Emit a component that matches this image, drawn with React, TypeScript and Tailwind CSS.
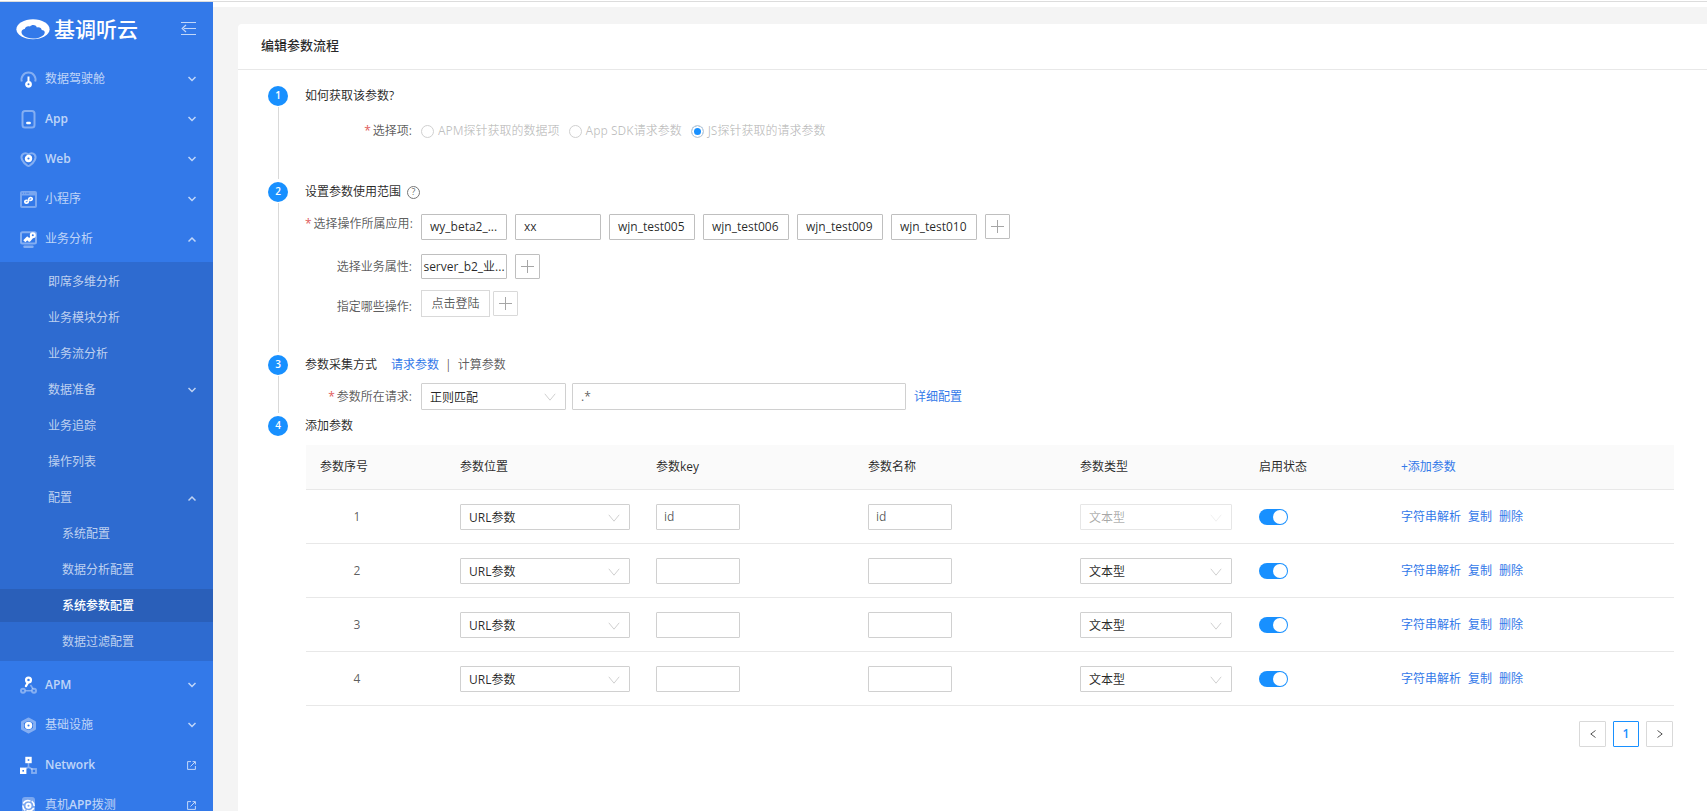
import React from 'react';
import clsx from 'clsx';

type MenuIconName = 'gauge' | 'phone' | 'heart' | 'mini' | 'chart' | 'apm' | 'infra' | 'network' | 'device';

const menuTop: { label: React.ReactNode; icon: MenuIconName; open?: boolean }[] = [
  { label: '数据驾驶舱', icon: 'gauge' },
  { label: <b>App</b>, icon: 'phone' },
  { label: <b>Web</b>, icon: 'heart' },
  { label: '小程序', icon: 'mini' },
  { label: '业务分析', icon: 'chart', open: true },
];

const subMenu: { label: string; level: 1 | 2; arrow?: 'up' | 'down'; active?: boolean }[] = [
  { label: '即席多维分析', level: 1 },
  { label: '业务模块分析', level: 1 },
  { label: '业务流分析', level: 1 },
  { label: '数据准备', level: 1, arrow: 'down' },
  { label: '业务追踪', level: 1 },
  { label: '操作列表', level: 1 },
  { label: '配置', level: 1, arrow: 'up' },
  { label: '系统配置', level: 2 },
  { label: '数据分析配置', level: 2 },
  { label: '系统参数配置', level: 2, active: true },
  { label: '数据过滤配置', level: 2 },
];

const menuBottom: { label: React.ReactNode; icon: MenuIconName; external?: boolean }[] = [
  { label: <b>APM</b>, icon: 'apm' },
  { label: '基础设施', icon: 'infra' },
  { label: <b>Network</b>, icon: 'network', external: true },
  { label: <>真机<b>APP</b>拨测</>, icon: 'device', external: true },
];

const sources = [
  { id: 'apm', label: 'APM探针获取的数据项' },
  { id: 'sdk', label: 'App SDK请求参数' },
  { id: 'js', label: 'JS探针获取的请求参数' },
];

const apps = ['wy_beta2_...', 'xx', 'wjn_test005', 'wjn_test006', 'wjn_test009', 'wjn_test010'];

const params = [
  { id: 1, key: 'id', name: 'id', locked: true },
  { id: 2, key: '', name: '', locked: false },
  { id: 3, key: '', name: '', locked: false },
  { id: 4, key: '', name: '', locked: false },
];

const iconShapes: Record<MenuIconName, React.ReactNode> = {
  gauge: (
    <>
      <path d="M1.800 10.500a7 7 0 1 1 13.400 0" strokeWidth="2" opacity=".4" />
      <path d="M8.500 5.500v5.500" strokeWidth="2" />
      <circle cx="8.500" cy="13.300" r="2.200" strokeWidth="2.400" />
    </>
  ),
  phone: (
    <>
      <rect x="2.500" y="0" width="12" height="16.500" rx="2.500" strokeWidth="2" opacity=".4" />
      <path d="M7.300 12h2.400" strokeWidth="2.400" strokeLinecap="round" />
    </>
  ),
  heart: (
    <>
      <path
        d="M8.500 3.600C6.800 1.900 4 1.900 2.500 3.500 1.100 5 1.300 7.200 2.200 9c1.200 2.500 3.200 4.400 5.200 5.600q1.100.6 2.200 0c2-1.200 4-3.100 5.200-5.600.9-1.800 1.100-4-.3-5.500C13 1.900 10.200 1.900 8.500 3.600Z"
        strokeWidth="2"
        opacity=".4"
      />
      <circle cx="8.500" cy="7.500" r="2.400" strokeWidth="2.600" />
    </>
  ),
  mini: (
    <>
      <path
        d="M2 0h13a2 2 0 0 1 2 2v13a2 2 0 0 1-2 2H2a2 2 0 0 1-2-2V2a2 2 0 0 1 2-2Zm0 4.500V15h13V4.500Z"
        fill="#fff"
        stroke="none"
        fillRule="evenodd"
        opacity=".35"
      />
      <path d="M1.800 2.200h1.200M4 2.200h1.200M6.200 2.200h3" stroke="#3379e9" strokeWidth="1" opacity=".7" />
      <path
        d="M6.800 9.300c-1.600-.1-2.200 1-1.900 1.900.5 1.400 3.400 1.200 3.500-.8l.3-2.300c.3-1.900 3.200-2.100 3.500-.5.2 1-.6 1.800-1.900 1.700"
        strokeWidth="1.700"
        strokeLinecap="round"
      />
    </>
  ),
  chart: (
    <>
      <rect x="1" y="1.200" width="15" height="11.200" rx="1.500" strokeWidth="2" opacity=".4" />
      <path d="M4.500 15.800h8" strokeWidth="2.400" strokeLinecap="round" opacity=".4" />
      <path d="m4.300 10.200 3-3 2 2 3-3.600" strokeWidth="3" strokeLinejoin="round" />
      <circle cx="12.800" cy="4.300" r="2" strokeWidth="2" />
    </>
  ),
  apm: (
    <>
      <circle cx="3" cy="13.800" r="2" strokeWidth="2" opacity=".4" />
      <circle cx="14" cy="13.800" r="2" strokeWidth="2" opacity=".4" />
      <path d="M5.500 13.800h6M10.500 8l2.500 3.800" strokeWidth="1.600" opacity=".4" />
      <circle cx="8.500" cy="3" r="2.400" strokeWidth="2.300" />
      <path d="M8 5.500 6 9" strokeWidth="2.400" strokeLinecap="round" />
    </>
  ),
  infra: (
    <>
      <path
        d="m8.500 2 6 3.300v6.400l-6 3.300-6-3.300V5.300Z"
        strokeWidth="3"
        strokeLinejoin="round"
        opacity=".4"
      />
      <circle cx="8.500" cy="8.500" r="2.400" strokeWidth="2.700" />
    </>
  ),
  network: (
    <>
      <path d="M8.500 6v4l-4 2.500M8.500 10l4 2.500" strokeWidth="1.600" opacity=".4" />
      <rect x="12" y="12" width="4" height="4" strokeWidth="1.800" opacity=".4" />
      <rect x="6.500" y="1" width="4" height="4" strokeWidth="2.400" />
      <rect x="1.200" y="11.800" width="4" height="4" strokeWidth="2.400" />
    </>
  ),
  device: (
    <>
      <rect x="2" y="0" width="13" height="17" rx="3" stroke="none" fill="#fff" opacity=".35" />
      <circle cx="8.500" cy="8.800" r="2" strokeWidth="2" />
      <path
        d="M3.200 6.500a6 6 0 0 1 7.300-2.400M2.800 8.500a6 6 0 0 0 2.500 4.800M13.800 11a6 6 0 0 1-7.300 2.400M14.200 9a6 6 0 0 0-2.500-4.800"
        strokeWidth="1.500"
      />
    </>
  ),
};

const MenuIcon: React.FC<{ name: MenuIconName }> = ({ name }) => (
  <svg viewBox="0 0 17 17" className="size-[17px] shrink-0 overflow-visible" fill="none" stroke="#fff" aria-hidden="true">
    {iconShapes[name]}
  </svg>
);

const Arrow: React.FC<{ up?: boolean }> = ({ up }) => (
  <svg viewBox="0 0 8 8" className="size-2 shrink-0" fill="none" stroke="currentColor" strokeWidth="1.500" aria-hidden="true">
    <path d={up ? 'm.5 6.500 3.500-3.500L7.500 6.500' : 'M.5 2 4 5.500 7.500 2'} />
  </svg>
);

const ExternalIcon: React.FC = () => (
  <svg viewBox="0 0 9 9" className="size-[9px] shrink-0" fill="none" stroke="currentColor" aria-hidden="true">
    <path d="M4 .6H.6v7.800h7.800V5M5.500.6h2.900v2.900M8 1 3.500 5.500" />
  </svg>
);

const Logo: React.FC = () => (
  <div className="flex items-center gap-1 text-white">
    <svg viewBox="0 0 34 21" className="h-[21px] w-[34px]" aria-hidden="true">
      <ellipse cx="17" cy="10.300" rx="16.600" ry="10" fill="#fff" />
      <path
        d="M6.500 15.800C4.600 13 5.600 10.600 8.700 10c.5-2.400 3.300-3.500 5.300-2.400 1.800-2.200 5.700-2 6.900.8 2.600-.6 4.700.6 4.800 2.600 3.200.2 4 2.700 2 4.900-2.700 2.500-6.500 3.600-10.700 3.600s-7.900-1.200-10.500-3.700Z"
        fill="#3379e9"
      />
    </svg>
    <span className="text-[21px] leading-6 font-medium">基调听云</span>
  </div>
);

const Sidebar: React.FC = () => (
  <aside className="w-[213px] shrink-0 overflow-hidden bg-[#3379e9] text-xs text-white/70">
    <div className="flex h-[57px] items-start justify-between pt-[15px] pr-[17px] pl-4">
      <Logo />
      <button type="button" aria-label="收起菜单" className="mt-1">
        <svg viewBox="0 0 15 15" className="size-[15px]" fill="none" stroke="currentColor" strokeWidth="1.200" aria-hidden="true">
          <path d="M0 1.500h15M3 7.500h12M0 13.500h15M5 4 1.200 7.500 5 11" />
        </svg>
      </button>
    </div>
    <nav>
      {menuTop.map((item) => (
        <a key={item.icon} href="#" className="flex h-10 items-center gap-2 pr-[17px] pl-5">
          <MenuIcon name={item.icon} />
          <span className="flex-1 *:font-semibold">{item.label}</span>
          <Arrow up={item.open} />
        </a>
      ))}
      <div className="mt-[3px] bg-[#2e6bd0] pt-0.5 pb-px">
        {subMenu.map((item) => (
          <div key={item.label} className="h-9 pt-px pb-0.5">
            <a
              href="#"
              className={clsx(
                'flex h-full items-center justify-between pr-[17px]',
                item.level === 1 ? 'pl-12' : 'pl-[62px]',
                item.active && 'bg-[#2a5fb9] font-medium text-white',
              )}
            >
              {item.label}
              {item.arrow && <Arrow up={item.arrow === 'up'} />}
            </a>
          </div>
        ))}
      </div>
      <div className="pt-1">
        {menuBottom.map((item) => (
          <a key={item.icon} href="#" className="flex h-10 items-center gap-2 pr-[17px] pl-5">
            <MenuIcon name={item.icon} />
            <span className="flex-1 *:font-semibold">{item.label}</span>
            {item.external ? <ExternalIcon /> : <Arrow />}
          </a>
        ))}
      </div>
    </nav>
  </aside>
);

const Step: React.FC<{ no: number; title: React.ReactNode; last?: boolean; className?: string; children: React.ReactNode }> = ({
  no,
  title,
  last,
  className,
  children,
}) => (
  <li className="flex gap-[17px]">
    <div className="flex w-5 shrink-0 flex-col items-center">
      <span className="flex size-5 shrink-0 items-center justify-center rounded-full bg-[#1890ff] text-[10px] font-semibold text-white">
        {no}
      </span>
      {!last && <span className="mt-px mb-[3px] w-px flex-1 bg-[#d9d9d9]" />}
    </div>
    <div className={clsx('min-w-0 flex-1', className)}>
      <div className="flex h-5 items-center text-black/85">{title}</div>
      {children}
    </div>
  </li>
);

const FieldLabel: React.FC<{ text: string; required?: boolean; htmlFor?: string }> = ({ text, required, htmlFor }) => (
  <label htmlFor={htmlFor} className="w-[116px] shrink-0 pr-[9px] text-right leading-5 whitespace-nowrap">
    {required && <span className="mr-0.5 text-[#e05c5c]">*</span>}
    {text}:
  </label>
);

const AddButton: React.FC<{ label: string; light?: boolean }> = ({ label, light }) => (
  <button
    type="button"
    aria-label={label}
    className={clsx(
      'flex size-[25px] items-center justify-center rounded-[1px] border',
      light ? 'border-[#d9d9d9]' : 'border-[#bfbfbf]',
    )}
  >
    <svg viewBox="0 0 13 13" className="size-[13px]" stroke="#a6a6a6" aria-hidden="true">
      <path d="M6.500 0v13M0 6.500h13" />
    </svg>
  </button>
);

const SelectBox: React.FC<{ label: string; value: string; id?: string; disabled?: boolean; className?: string }> = ({
  label,
  value,
  id,
  disabled,
  className,
}) => (
  <div className={clsx('relative', className)}>
    <select
      id={id}
      aria-label={id ? undefined : label}
      disabled={disabled}
      defaultValue={value}
      className="size-full appearance-none rounded-[1px] border border-[#d0d0d0] bg-white pt-0.5 pl-2 text-black/85 disabled:border-[#e6e6e6] disabled:text-black/35 disabled:opacity-100"
    >
      <option>{value}</option>
    </select>
    <svg
      viewBox="0 0 12 8"
      className={clsx('pointer-events-none absolute top-[10px] right-[10px] h-2 w-3', disabled && 'opacity-30')}
      fill="none"
      stroke="#d0d0d0"
      aria-hidden="true"
    >
      <path d="M.8.800 6 7.200 11.200.8" />
    </svg>
  </div>
);

const ParamTable: React.FC = () => (
  <table className="mt-[9px] ml-px w-full table-fixed border-separate border-spacing-0 text-left">
    <colgroup>
      <col className="w-[140px]" />
      <col className="w-[196px]" />
      <col className="w-[212px]" />
      <col className="w-[212px]" />
      <col className="w-[179px]" />
      <col className="w-[142px]" />
      <col />
    </colgroup>
    <thead>
      <tr className="h-[45px] text-black/85 *:border-b *:border-[#e8e8e8] *:bg-[#fafafa] *:px-[14px] *:font-normal">
        <th>参数序号</th>
        <th>参数位置</th>
        <th>参数key</th>
        <th>参数名称</th>
        <th>参数类型</th>
        <th>启用状态</th>
        <th>
          <a href="#" className="text-[#3379e9]">+添加参数</a>
        </th>
      </tr>
    </thead>
    <tbody>
      {params.map((row) => (
        <tr key={row.id} className="h-[54px] *:border-b *:border-[#e8e8e8] *:px-[14px]">
          <td>
            <span className="block w-[74px] text-center">{row.id}</span>
          </td>
          <td>
            <SelectBox label="参数位置" value="URL参数" className="h-[26px] w-[170px]" />
          </td>
          <td>
            <input
              aria-label="参数key"
              defaultValue={row.key}
              className="block h-[26px] w-[84px] rounded-[1px] border border-[#d0d0d0] px-[7px]"
            />
          </td>
          <td>
            <input
              aria-label="参数名称"
              defaultValue={row.name}
              className="block h-[26px] w-[84px] rounded-[1px] border border-[#d0d0d0] px-[7px]"
            />
          </td>
          <td>
            <SelectBox label="参数类型" value="文本型" disabled={row.locked} className="h-[26px] w-[152px]" />
          </td>
          <td>
            <button
              type="button"
              role="switch"
              aria-checked="true"
              aria-label="启用状态"
              className="flex h-4 w-[29px] items-center justify-end rounded-full bg-[#1890ff] pr-px"
            >
              <span className="size-[14px] rounded-full bg-white" />
            </button>
          </td>
          <td>
            <div className="flex gap-[7px] text-[#3379e9]">
              <a href="#">字符串解析</a>
              <a href="#">复制</a>
              <a href="#">删除</a>
            </div>
          </td>
        </tr>
      ))}
    </tbody>
  </table>
);

const Pagination: React.FC = () => (
  <nav aria-label="分页" className="mt-[15px] flex justify-end gap-[7px]">
    <button type="button" aria-label="上一页" className="flex h-[26px] w-[27px] items-center justify-center rounded-[1px] border border-[#d9d9d9]">
      <svg viewBox="0 0 6 8" className="h-2 w-1.5" fill="none" stroke="#555" aria-hidden="true">
        <path d="M5.500.5.800 4l4.700 3.500" />
      </svg>
    </button>
    <button type="button" className="h-[26px] w-[26px] rounded-[1px] border border-[#1890ff] font-semibold text-[#1890ff]">
      1
    </button>
    <button type="button" aria-label="下一页" className="flex h-[26px] w-[27px] items-center justify-center rounded-[1px] border border-[#d9d9d9]">
      <svg viewBox="0 0 6 8" className="h-2 w-1.5" fill="none" stroke="#555" aria-hidden="true">
        <path d="M.5.500 5.200 4 .5 7.500" />
      </svg>
    </button>
  </nav>
);

const App: React.FC = () => {
  return (
    <div className="flex h-screen flex-col bg-white pt-px font-['Open_Sans','Noto_Sans_CJK_SC',sans-serif] text-xs text-black/65">
      <div className="h-px shrink-0 bg-[#dcdcdc]" />
      <div className="flex min-h-0 flex-1">
        <Sidebar />
        <main className="mt-[5px] min-w-0 flex-1 overflow-auto bg-[#f4f4f4] pt-[17px] pl-[25px]">
          <section className="min-h-full rounded-tl-sm bg-white">
            <h1 className="flex h-[46px] items-center border-b border-[#e8e8e8] px-[23px] pb-px text-[13px] font-medium text-black/85">
              编辑参数流程
            </h1>
            <ol className="pt-4 pr-[34px] pl-[30px]">
              <Step no={1} title="如何获取该参数?" className="pb-[41px]">
                <div className="mt-[15px] flex items-center">
                  <FieldLabel text="选择项" required />
                  <div className="flex gap-[9px]">
                    {sources.map((source) => (
                      <label key={source.id} className="flex items-center gap-1 leading-5 text-black/25">
                        <input
                          type="radio"
                          name="source"
                          disabled
                          defaultChecked={source.id === 'js'}
                          className="size-[13px] appearance-none rounded-full border border-[#d0d0d0] checked:bg-[#1890ff] checked:shadow-[inset_0_0_0_2px_white]"
                        />
                        {source.label}
                      </label>
                    ))}
                  </div>
                </div>
              </Step>

              <Step
                no={2}
                className="pb-[38px]"
                title={
                  <>
                    设置参数使用范围
                    <span className="ml-1.5 flex size-[13px] items-center justify-center rounded-full border border-[#777] text-[9px] text-black/65">
                      ?
                    </span>
                  </>
                }
              >
                <div className="mt-3 flex items-start">
                  <FieldLabel text="选择操作所属应用" required />
                  <div className="flex flex-wrap gap-2">
                    {apps.map((app) => (
                      <button
                        key={app}
                        type="button"
                        className="h-[26px] w-[86px] rounded-[1px] border border-[#bfbfbf] px-2 text-left text-black/85"
                      >
                        {app}
                      </button>
                    ))}
                    <AddButton label="添加应用" />
                  </div>
                </div>
                <div className="mt-[14px] flex items-center">
                  <FieldLabel text="选择业务属性" />
                  <div className="flex gap-2">
                    <button
                      type="button"
                      className="h-[25px] w-[86px] rounded-[1px] border border-[#bfbfbf] text-center whitespace-nowrap text-black/85"
                    >
                      server_b2_业...
                    </button>
                    <AddButton label="添加业务属性" />
                  </div>
                </div>
                <div className="mt-[11px] flex items-end">
                  <FieldLabel text="指定哪些操作" />
                  <div className="flex items-center gap-[3px]">
                    <button type="button" className="h-[27px] w-[69px] border border-[#d9d9d9] text-center">
                      点击登陆
                    </button>
                    <AddButton label="添加操作" light />
                  </div>
                </div>
              </Step>

              <Step
                no={3}
                className="pb-1.5"
                title={
                  <>
                    参数采集方式
                    <a href="#" className="ml-[14px] text-[#3379e9]">请求参数</a>
                    <span className="mx-1.5 text-black/65">|</span>
                    <a href="#" className="text-black/65">计算参数</a>
                  </>
                }
              >
                <div className="mt-2 flex items-center">
                  <FieldLabel text="参数所在请求" required htmlFor="match-mode" />
                  <SelectBox id="match-mode" label="匹配方式" value="正则匹配" className="h-[27px] w-[145px]" />
                  <input
                    aria-label="匹配表达式"
                    defaultValue=".*"
                    className="ml-1.5 h-[27px] w-[334px] rounded-[1px] border border-[#d0d0d0] px-2"
                  />
                  <a href="#" className="ml-2 text-[#3379e9]">详细配置</a>
                </div>
              </Step>

              <Step no={4} title="添加参数" last>
                <ParamTable />
                <Pagination />
              </Step>
            </ol>
          </section>
        </main>
      </div>
    </div>
  );
};

export default App;
